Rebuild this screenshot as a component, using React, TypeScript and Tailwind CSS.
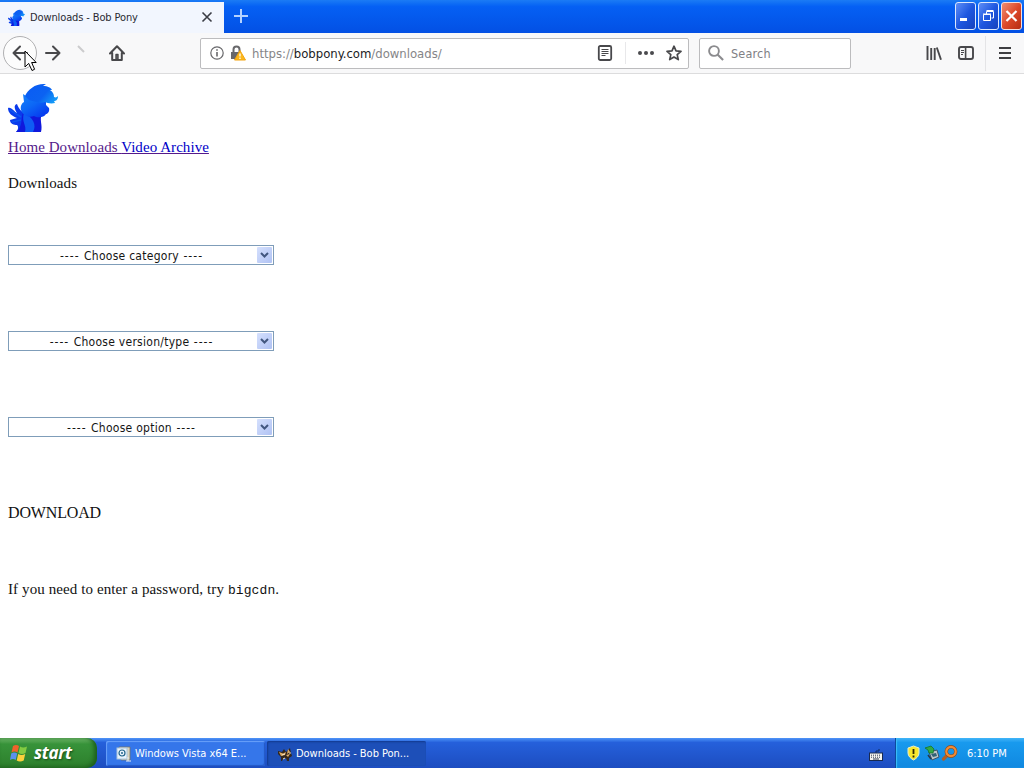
import React from "react";

const Pony = ({ className }: { className: string }) => (
  <svg viewBox="0 0 50 50" className={className}>
    <defs>
      <linearGradient id="mane" x1="0" y1="0.2" x2="1" y2="0.7">
        <stop offset="0" stopColor="#0a5cf4" />
        <stop offset="0.6" stopColor="#0b62f2" />
        <stop offset="1" stopColor="#149cf8" />
      </linearGradient>
      <linearGradient id="coat" x1="0" y1="0" x2="0.8" y2="1">
        <stop offset="0" stopColor="#1482fa" />
        <stop offset="0.5" stopColor="#0c66f6" />
        <stop offset="1" stopColor="#0636ee" />
      </linearGradient>
    </defs>
    <path d="M17 30 C14 31 11 27 9 22 C5 23 7 28 9 31 C6 30 4 25 0 26 C0 31 4 34 9 36 L2 38 C2 42 6 43 9 43 C11 45 10 48 8 50 L24 50 L24 34Z" fill="#0a3aec" />
    <path d="M2 28 L13 35M4 40 L13 38" stroke="#0c54f0" strokeWidth="1.5" />
    <path d="M15 30 L34 32 C31 38 35 43 33 50 L8 50 C14 46 13 39 15 30Z" fill="#1018dc" />
    <path d="M16 31 C25 35 29 43 25 50 L17 50 C19 43 13 40 16 31Z" fill="#0f5cf4" />
    <path d="M15 12 L21 16 L38 17 L38 23 L41 26 C42 30 39 32 38 32 C36 36 29 36 26 34 C21 36 15 34 13 28 C12 24 14 21 16 20Z" fill="url(#coat)" />
    <path d="M17 14 C20 7 28 1 38 2 L35 4 C40 4 43 6 44 8 L42 8 C45 10 46 12 46 15 C48 16 49 15 50 14 C50 18 48 19 46 19 L47 21 C43 22 39 21 37 20 C32 22 25 19 21 18Z" fill="url(#mane)" />
  </svg>
);

const Arrow = ({ className }: { className: string }) => (
  <svg viewBox="0 0 16 16" className={className} fill="none" stroke="#48484b" strokeWidth="2" strokeLinecap="round" strokeLinejoin="round">
    <path d="M15 8H1.5M8 1.5L1.5 8L8 14.5" />
  </svg>
);

const Flag = () => (
  <svg viewBox="0 0 20 20" className="w-[20px] h-[20px]">
    <path d="M4 3 Q7 1 10 3 L8.5 9.5 Q5.5 7.5 2.5 9.5Z" fill="#f0622c" />
    <path d="M11 3.5 Q14 5.5 18 3.5 L16.5 10 Q13 12 9.5 10Z" fill="#83cb42" />
    <path d="M2.2 10.5 Q5 8.5 8.2 10.5 L6.7 17 Q4 15 1 17Z" fill="#5b91ed" />
    <path d="M9.2 11 Q12.5 13 16.2 11 L14.7 17.5 Q11 19.5 7.7 17.5Z" fill="#fbd13c" />
  </svg>
);

const WindowButtons = () => (
  <div className="flex gap-[2px] mt-[2px] pr-[2px]">
    <div className="w-[21px] h-[28px] rounded-[3px] border border-[#dce8fd] bg-linear-to-br from-[#5e8df6] via-[#1e57e0] to-[#1742bd]">
      <svg viewBox="0 0 19 26" className="w-[19px] h-[26px]"><path d="M4 16.5h7" stroke="#fff" strokeWidth="3" /></svg>
    </div>
    <div className="w-[21px] h-[28px] rounded-[3px] border border-[#dce8fd] bg-linear-to-br from-[#5e8df6] via-[#1e57e0] to-[#1742bd]">
      <svg viewBox="0 0 19 26" className="w-[19px] h-[26px]" fill="none" stroke="#fff">
        <path d="M7.5 11V8.5h7v6.5h-2M7.5 7.5h7" />
        <path d="M4.5 11.5h7v6h-7zM4 11h8" />
      </svg>
    </div>
    <div className="w-[21px] h-[28px] rounded-[3px] border border-[#f6dfdc] bg-linear-to-br from-[#ef8c70] via-[#de492a] to-[#b52d12]">
      <svg viewBox="0 0 19 26" className="w-[19px] h-[26px]"><path d="M4.5 8l10 10M14.5 8L4.5 18" stroke="#fff" strokeWidth="2.2" /></svg>
    </div>
  </div>
);

const TitleBar = () => (
  <div className="h-[33px] flex bg-linear-to-b from-[#1b7bf5] via-[#0560f4] via-20% to-[#0350e4]">
    <div className="mt-[2px] w-[224px] h-[31px] bg-[#f2f6fe] flex items-center pl-[8px]">
      <Pony className="w-[17px] h-[17px]" />
      <span className="ml-[5px] mt-[1px] w-[170px] text-[11px] tracking-[-0.12px] text-[#2a2a32] whitespace-nowrap">Downloads - Bob Pony</span>
      <svg viewBox="0 0 12 12" className="w-[12px] h-[12px] ml-[1px] -mt-[2px]"><path d="M1.5 1.5l9 9M10.5 1.5l-9 9" stroke="#3b3d45" strokeWidth="1.6" /></svg>
    </div>
    <svg viewBox="0 0 14 14" className="w-[14px] h-[14px] ml-[10px] mt-[9px]"><path d="M7 0v14M0 7h14" stroke="#b4d2ff" strokeWidth="2" /></svg>
    <div className="flex-1" />
    <WindowButtons />
  </div>
);

const Toolbar = () => (
  <div className="h-[41px] bg-[#f8f8f9] border-b border-[#dcdcdd] flex items-center relative">
    <div className="ml-[3px] w-[34px] h-[34px] rounded-full border border-[#b0b0b2] bg-[#fcfcfc] flex items-center justify-center">
      <Arrow className="w-[16px] h-[16px]" />
    </div>
    <Arrow className="w-[16px] h-[16px] ml-[8px] rotate-180" />
    <svg viewBox="0 0 10 10" className="w-[10px] h-[10px] ml-[15px] -mt-[8px]"><path d="M2 2l6 6" stroke="#cbcbcd" strokeWidth="2" /></svg>
    <svg viewBox="0 0 16 16" className="w-[16px] h-[16px] ml-[23px]" fill="none" stroke="#48484b" strokeWidth="2" strokeLinejoin="round" strokeLinecap="round">
      <path d="M1 8.5L8 1.2l7 7.3M3.2 8v7h9.6V8" />
      <path d="M7 9.5h2v5H7z" strokeWidth="1.4" fill="#777" />
    </svg>

    <div className="ml-[75px] w-[489px] h-[31px] bg-white border border-[#bcbcbe] rounded-[2px] flex items-center">
      <svg viewBox="0 0 14 14" className="w-[14px] h-[14px] ml-[9px]" fill="none" stroke="#68686b">
        <circle cx="7" cy="7" r="6.2" strokeWidth="1.2" />
        <path d="M7 6v4.5M7 3.2v1.6" strokeWidth="1.6" />
      </svg>
      <svg viewBox="0 0 16 16" className="w-[16px] h-[16px] ml-[6px]">
        <path d="M3.5 8V4.5a3 3 0 0 1 6 0V8" fill="none" stroke="#68686b" strokeWidth="2" />
        <path d="M1 7h10v7H1z" fill="#68686b" />
        <path d="M10 5.5l5.5 9.5h-11z" fill="#fbb81c" stroke="#f3a410" strokeLinejoin="round" />
        <path d="M10 8.5v3M10 12.6v1.4" stroke="#fff" strokeWidth="1.3" />
      </svg>
      <span className="ml-[6px] mt-[2px] w-[340px] text-[13px] tracking-[-0.02px] text-[#858587] whitespace-nowrap">
        https://<span className="text-[#1c1c1e]">bobpony.com</span>/downloads/
      </span>
      <svg viewBox="0 0 16 16" className="w-[16px] h-[16px] ml-[5px]" fill="none" stroke="#48484b">
        <rect x="1.8" y="1" width="12.4" height="14" rx="1.5" strokeWidth="1.8" />
        <path d="M4.5 4.5h7M4.5 6.5h7M4.5 8.5h7M4.5 10.5h4" />
      </svg>
      <div className="w-px h-[22px] ml-[12px] bg-[#e8e8ea]" />
      <svg viewBox="0 0 16 4" className="w-[16px] h-[4px] ml-[12px]" fill="#4a4a4d">
        <circle cx="2" cy="2" r="2" /><circle cx="8" cy="2" r="2" /><circle cx="14" cy="2" r="2" />
      </svg>
      <svg viewBox="0 0 16 16" className="w-[16px] h-[16px] ml-[12px]" fill="none" stroke="#48484b" strokeWidth="1.7" strokeLinejoin="round">
        <path d="M8 1.2l2 4.6 5 .5-3.8 3.3 1.1 5L8 12l-4.3 2.6 1.1-5L1 6.3l5-.5z" />
      </svg>
    </div>

    <div className="ml-[10px] w-[152px] h-[31px] bg-white border border-[#bcbcbe] rounded-[2px] flex items-center">
      <svg viewBox="0 0 16 16" className="w-[16px] h-[16px] ml-[8px]" fill="none" stroke="#8b8b8e">
        <circle cx="6" cy="6" r="4.9" strokeWidth="1.9" />
        <path d="M9.5 9.5l5.6 5.6" strokeWidth="2.1" />
      </svg>
      <span className="ml-[7px] mt-[2px] text-[12.5px] tracking-[0.2px] text-[#808084]">Search</span>
    </div>

    <svg viewBox="0 0 16 16" className="w-[16px] h-[16px] ml-[75px]" fill="none" stroke="#48484b" strokeWidth="1.9">
      <path d="M1.5 1v14M5.2 3v12M8.7 3v12M10.8 2.5l4.2 12.3" />
    </svg>
    <svg viewBox="0 0 16 16" className="w-[16px] h-[16px] ml-[16px]" fill="none" stroke="#48484b" strokeWidth="1.9">
      <rect x="1" y="2" width="14" height="12" rx="2" />
      <path d="M7.6 2v12" strokeWidth="1.6" />
      <path d="M3 5.5h3M3 7.5h3M3 9.5h2" strokeWidth="1" />
    </svg>
    <div className="w-px h-[35px] ml-[11px] bg-[#e4e4e6]" />
    <svg viewBox="0 0 12 14" className="w-[12px] h-[14px] ml-[13px]"><path d="M0 2h12M0 7h12M0 12h12" stroke="#3f3f42" strokeWidth="2" /></svg>

    {/* mouse pointer */}
    <svg viewBox="0 0 13 22" className="absolute left-[24px] top-[17px] w-[13px] h-[22px]">
      <path d="M1 1v16l3.7-3.6L8 20.5l2.6-1.2-3-6.8h4.6z" fill="#fff" stroke="#000" />
    </svg>
  </div>
);

const Select = ({ label }: { label: string }) => (
  <div className="w-[266px] h-[20px] border border-[#7f9db9] bg-white flex items-center">
    <span className="flex-1 pt-[1px] pr-[3px] text-center text-[12px] leading-[18px] tracking-[0.27px] text-[#151515] whitespace-nowrap">
      <span className="tracking-[1px]">---- </span>
      {label}
      <span className="tracking-[1px]"> ----</span>
    </span>
    <div className="w-[15px] h-[16px] mr-[1px] rounded-[1px] bg-linear-to-br from-[#d5e0fd] to-[#b0c2f3] flex items-center justify-center">
      <svg viewBox="0 0 9 6" className="w-[9px] h-[6px]"><path d="M1 1l3.5 3.5L8 1" fill="none" stroke="#42577f" strokeWidth="2" /></svg>
    </div>
  </div>
);

const Page = () => (
  <div className="flex-1 bg-white pl-[8px] pt-[8px] font-['Liberation_Serif',serif] text-[15px] leading-[18px] text-[#111]">
    <Pony className="w-[50px] h-[50px]" />
    <div className="mt-[6px] tracking-[0.06px] text-[#551a8b] underline whitespace-nowrap">
      <span>Home </span>
      <span>Downloads </span>
      <span className="text-[#0000c8]">Video Archive</span>
    </div>
    <p className="mt-[18px] tracking-[0.08px]">Downloads</p>
    <div className="mt-[53px] flex flex-col gap-[66px] font-['DejaVu_Sans_Condensed','DejaVu_Sans',sans-serif]">
      <Select label="Choose category" />
      <Select label="Choose version/type" />
      <Select label="Choose option" />
    </div>
    <p className="mt-[67px] text-[16px] tracking-[-0.15px]">DOWNLOAD</p>
    <p className="mt-[58px] tracking-[0.1px] whitespace-nowrap">
      If you need to enter a password, try <code className="font-['Liberation_Mono',monospace] text-[13px]">bigcdn</code>.
    </p>
  </div>
);

const Taskbar = () => (
  <div className="h-[30px] flex bg-linear-to-b from-[#4f94f8] via-[#2560db] via-15% to-[#1d4dc0] text-white text-[11px]">
    <div className="w-[97px] h-[30px] rounded-r-[10px] bg-linear-to-b from-[#6cb668] via-[#37933a] via-20% to-[#2d7f2c] shadow-[inset_-3px_-1px_4px_#1c5f1c] flex items-center pl-[9px]">
      <Flag />
      <span className="ml-[5px] font-['Open_Sans',sans-serif] font-bold italic text-[17px] tracking-[-0.3px] leading-[26px] [text-shadow:1px_1px_2px_#174d17]">start</span>
    </div>
    <div className="ml-[9px] mt-[3px] w-[159px] h-[25px] rounded-[2px] bg-[#3576ea] shadow-[inset_1px_1px_1px_#6ba2fa,inset_-1px_-1px_1px_#2459c6] flex items-center pl-[10px]">
      <svg viewBox="0 0 16 16" className="w-[16px] h-[16px]">
        <path d="M3 1h11v13H5z" fill="#d9d4bd" stroke="#75736a" strokeWidth=".8" />
        <rect x="1" y="2" width="10" height="11" fill="#e8f3fc" stroke="#a8c4dc" />
        <circle cx="6" cy="7" r="3" fill="none" stroke="#23668c" strokeWidth="1.2" />
        <circle cx="6" cy="7" r="1" fill="#23668c" />
        <path d="M12 11v4M10 15h5" stroke="#eee" />
      </svg>
      <span className="ml-[3px] mt-[1px] tracking-[-0.03px] whitespace-nowrap">Windows Vista x64 E...</span>
    </div>
    <div className="ml-[2px] mt-[3px] w-[159px] h-[25px] rounded-[2px] bg-[#1d4fb8] shadow-[inset_1px_1px_2px_#123a8e] flex items-center pl-[10px]">
      <svg viewBox="0 0 16 16" className="w-[16px] h-[16px]">
        <path d="M1 5l4 1 2-3 2 3 4-4 1 5 1 3-3 2v3h-2l-1-3-3 1-1 2H4v-4L1 8z" fill="#33271c" />
        <path d="M2 6l4 1.5 3-1.500-1 3-4 1zM11 3l2 3-3 2zM9 9l4-1-2 3z" fill="#dfae68" />
        <path d="M5 9l3-1M12 7h2M6 13l2-1" stroke="#f5e4c7" />
      </svg>
      <span className="ml-[3px] mt-[2px] tracking-[-0.03px] whitespace-nowrap">Downloads - Bob Pon...</span>
    </div>
    <div className="flex-1" />
    <svg viewBox="0 0 14 13" className="w-[14px] h-[13px] mt-[10px] mr-[12px]">
      <path d="M7 5V3h3V1" stroke="#102a60" fill="none" />
      <rect x="0.5" y="5" width="13" height="7.5" fill="#f4f4ef" stroke="#182a50" />
      <path d="M2 7.2h10M2 9.2h10" stroke="#303a50" strokeDasharray="1 1" />
      <path d="M4 11h6" stroke="#303a50" />
    </svg>
    <div className="w-[129px] border-l border-[#0c4a9c] bg-linear-to-b from-[#3fb4f8] via-[#189aee] via-15% to-[#1088e0] shadow-[inset_1px_0_1px_#3cc0fa] flex items-center pl-[10px]">
      <svg viewBox="0 0 15 16" className="w-[15px] h-[16px]">
        <path d="M7.5 1L13 3v5c0 3-2.5 5.5-5.5 7C4.5 13.5 2 11 2 8V3z" fill="#f9e72d" stroke="#e7edcc" />
        <path d="M7.5 4v5M7.5 10.5v2" stroke="#302b00" strokeWidth="1.8" />
      </svg>
      <svg viewBox="0 0 16 16" className="w-[16px] h-[16px] ml-[3px]">
        <path d="M5 7l8-2 2 7-7 3z" fill="#bdc7c7" stroke="#3e5266" />
        <path d="M7 9l5-1 1 3-4 1z" fill="#326177" />
        <path d="M1 3l6-2 3 3-1 4H5L4 5z" fill="#33a944" stroke="#14752d" strokeWidth=".8" />
        <path d="M4 10l3 4" stroke="#26384a" strokeWidth="1.5" />
      </svg>
      <svg viewBox="0 0 16 16" className="w-[17px] h-[16px] ml-[1px]" fill="none">
        <path d="M6 10l-4 4" stroke="#b05f26" strokeWidth="3.2" strokeLinecap="round" />
        <circle cx="9.5" cy="6.5" r="4.7" stroke="#8d4a1b" strokeWidth="3.4" />
        <circle cx="9.5" cy="6.5" r="4.7" stroke="#f08b35" strokeWidth="2.2" />
      </svg>
      <span className="ml-[9px] mt-[2px] whitespace-nowrap tracking-[-0.03px]">6:10 PM</span>
    </div>
  </div>
);

const App = () => {
  return (
    <div className="w-[1024px] h-[768px] overflow-hidden flex flex-col font-['DejaVu_Sans_Condensed','DejaVu_Sans',sans-serif]">
      <TitleBar />
      <Toolbar />
      <Page />
      <Taskbar />
    </div>
  );
};

export default App;
